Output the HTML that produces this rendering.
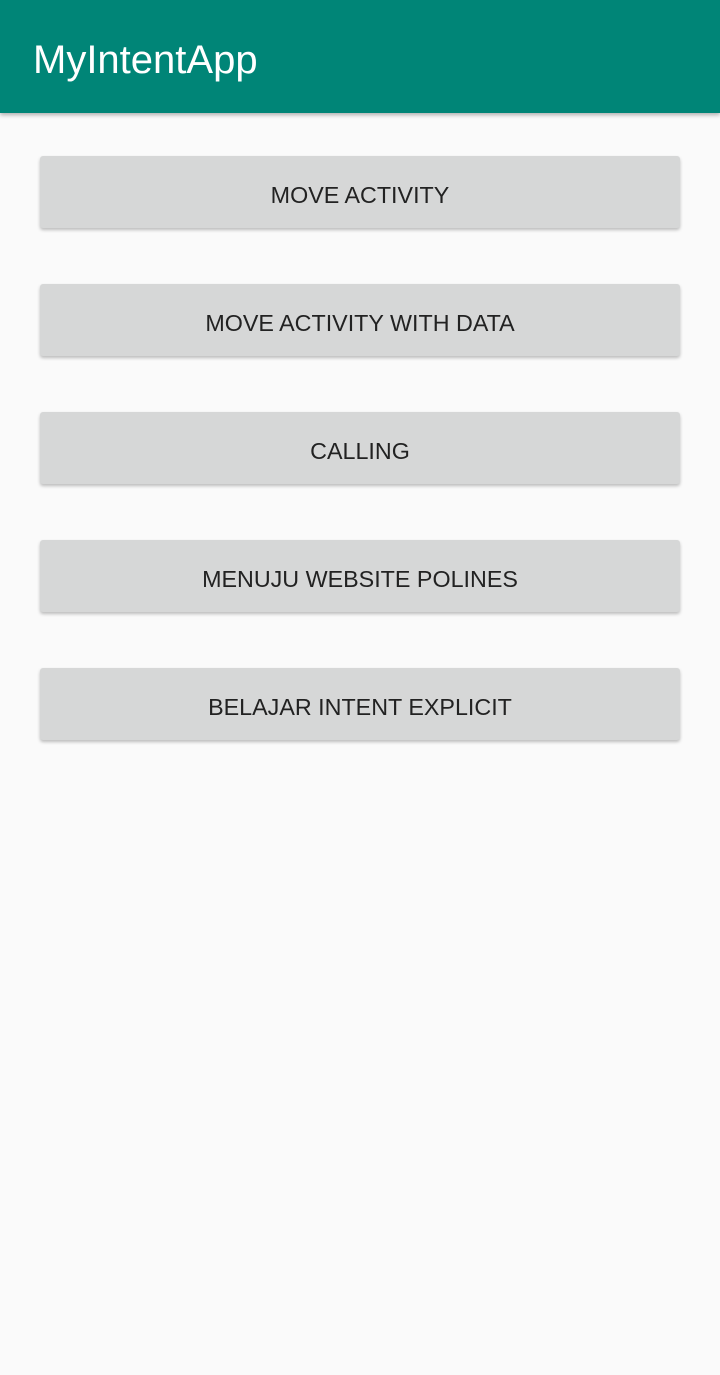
<!DOCTYPE html>
<html><head><style>
html,body{margin:0;padding:0;width:720px;height:1375px;background:#fafafa;overflow:hidden;font-family:"Liberation Sans",sans-serif;}
.bar{position:absolute;left:0;top:0;width:720px;height:113px;background:#008577;box-shadow:0 2px 4px rgba(0,0,0,0.3);}
.bar span{position:absolute;left:33px;top:38px;color:#fff;font-size:40px;}
.btn{position:absolute;left:40px;width:640px;height:72px;background:#d6d7d7;border-radius:3px;box-shadow:0 2px 3px rgba(0,0,0,0.25);color:#222;font-size:23.3px;text-align:center;line-height:79px;}
</style></head><body>
<div class="bar"><span>MyIntentApp</span></div>
<div class="btn" style="top:156px">MOVE ACTIVITY</div>
<div class="btn" style="top:284px">MOVE ACTIVITY WITH DATA</div>
<div class="btn" style="top:412px">CALLING</div>
<div class="btn" style="top:540px">MENUJU WEBSITE POLINES</div>
<div class="btn" style="top:668px">BELAJAR INTENT EXPLICIT</div>
</body></html>
